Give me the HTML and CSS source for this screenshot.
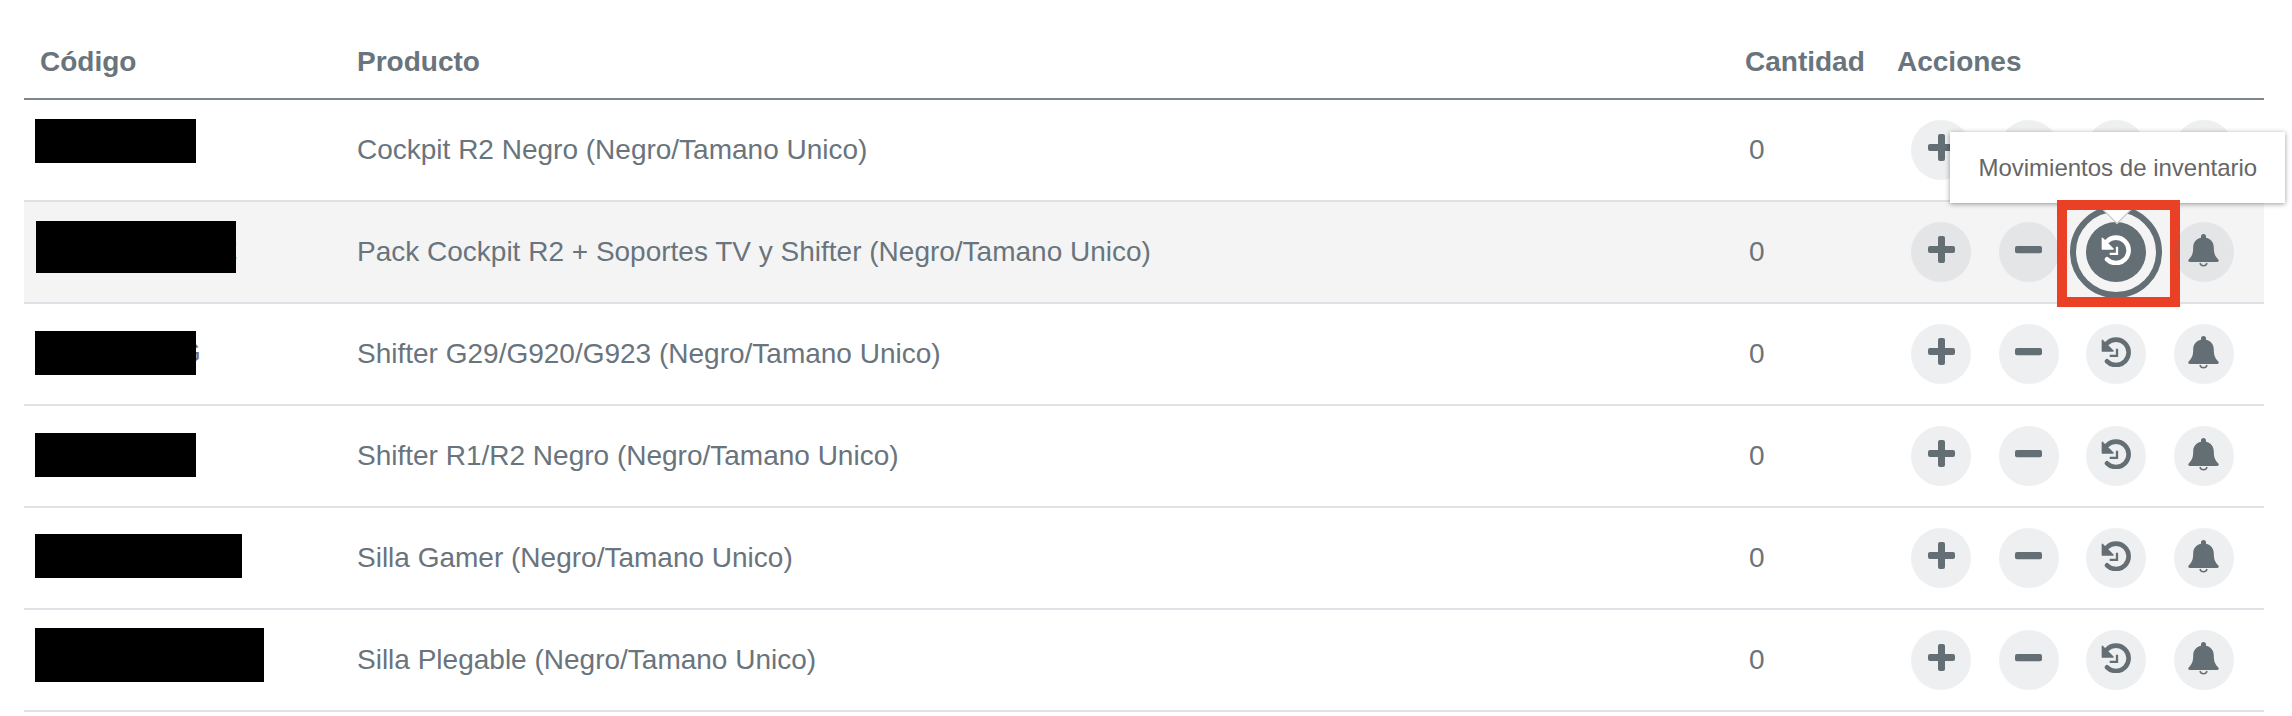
FILE: index.html

```html
<!DOCTYPE html>
<html lang="es">
<head>
<meta charset="utf-8">
<title>Inventario</title>
<link rel="stylesheet" href="styles.css">
</head>
<body>
<svg class="defs" width="0" height="0">
  <symbol id="i-plus" viewBox="0 0 27 27"><path d="M10 2a2 2 0 0 1 2-2h3a2 2 0 0 1 2 2v8h8a2 2 0 0 1 2 2v3a2 2 0 0 1-2 2h-8v8a2 2 0 0 1-2 2h-3a2 2 0 0 1-2-2v-8H2a2 2 0 0 1-2-2v-3a2 2 0 0 1 2-2h8z" fill="currentColor"/></symbol>
  <symbol id="i-minus" viewBox="0 0 27 27"><rect x="0" y="10" width="27" height="7.300" rx="2" fill="currentColor"/></symbol>
  <symbol id="i-history" viewBox="0 0 30 30">
    <path d="M6 6.300A12.700 12.700 0 1 1 6 24.300" fill="none" stroke="currentColor" stroke-width="4.600" stroke-linecap="round"/>
    <path d="M1.300 3.200v10.800h10.800z" fill="currentColor" stroke="currentColor" stroke-width="1.300" stroke-linejoin="round"/>
    <path d="M16 11.700v7.200H8.700" fill="none" stroke="currentColor" stroke-width="2.300"/>
  </symbol>
  <symbol id="i-bell" viewBox="0 0 31 34">
    <path d="M15.500 0a2.500 2.500 0 0 1 2.500 2.500v1.300c5 1 7.800 5 7.800 9.700 0 7 1.900 9.200 4.500 12 .9 1 .3 2.500-1 2.500H1.700c-1.300 0-1.900-1.500-1-2.500 2.600-2.800 4.500-5 4.500-12 0-4.700 2.800-8.700 7.800-9.700V2.500A2.500 2.500 0 0 1 15.500 0z" fill="currentColor"/>
    <path d="M12 29a3.600 3.600 0 0 0 7 0" fill="none" stroke="currentColor" stroke-width="1.500"/>
  </symbol>
</svg>
<table class="stock">
  <thead>
    <tr><th class="c-code">Código</th><th class="c-prod">Producto</th><th class="c-qty">Cantidad</th><th class="c-act">Acciones</th></tr>
  </thead>
  <tbody>
    <tr>
      <td><span class="mask m1"></span></td>
      <td>Cockpit R2 Negro (Negro/Tamano Unico)</td>
      <td>0</td>
      <td><div class="acts">
        <a class="act"><svg class="ic-pm"><use href="#i-plus"/></svg></a>
        <a class="act"><svg class="ic-pm"><use href="#i-minus"/></svg></a>
        <a class="act"><svg class="ic-h"><use href="#i-history"/></svg></a>
        <a class="act"><svg class="ic-b"><use href="#i-bell"/></svg></a>
      </div></td>
    </tr>
    <tr class="hover">
      <td><span class="mask m2"><span class="tail">2</span></span></td>
      <td>Pack Cockpit R2 + Soportes TV y Shifter (Negro/Tamano Unico)</td>
      <td>0</td>
      <td><div class="acts">
        <a class="act"><svg class="ic-pm"><use href="#i-plus"/></svg></a>
        <a class="act"><svg class="ic-pm"><use href="#i-minus"/></svg></a>
        <a class="act active"><svg class="ic-h"><use href="#i-history"/></svg>
          <span class="ring"></span>
          <span class="caret"></span>
          <span class="tip">Movimientos de inventario</span>
          <span class="redbox"></span>
        </a>
        <a class="act"><svg class="ic-b"><use href="#i-bell"/></svg></a>
      </div></td>
    </tr>
    <tr>
      <td><span class="mask m3"><span class="tail">G</span></span></td>
      <td>Shifter G29/G920/G923 (Negro/Tamano Unico)</td>
      <td>0</td>
      <td><div class="acts">
        <a class="act"><svg class="ic-pm"><use href="#i-plus"/></svg></a>
        <a class="act"><svg class="ic-pm"><use href="#i-minus"/></svg></a>
        <a class="act"><svg class="ic-h"><use href="#i-history"/></svg></a>
        <a class="act"><svg class="ic-b"><use href="#i-bell"/></svg></a>
      </div></td>
    </tr>
    <tr>
      <td><span class="mask m4"></span></td>
      <td>Shifter R1/R2 Negro (Negro/Tamano Unico)</td>
      <td>0</td>
      <td><div class="acts">
        <a class="act"><svg class="ic-pm"><use href="#i-plus"/></svg></a>
        <a class="act"><svg class="ic-pm"><use href="#i-minus"/></svg></a>
        <a class="act"><svg class="ic-h"><use href="#i-history"/></svg></a>
        <a class="act"><svg class="ic-b"><use href="#i-bell"/></svg></a>
      </div></td>
    </tr>
    <tr>
      <td><span class="mask m5"></span></td>
      <td>Silla Gamer (Negro/Tamano Unico)</td>
      <td>0</td>
      <td><div class="acts">
        <a class="act"><svg class="ic-pm"><use href="#i-plus"/></svg></a>
        <a class="act"><svg class="ic-pm"><use href="#i-minus"/></svg></a>
        <a class="act"><svg class="ic-h"><use href="#i-history"/></svg></a>
        <a class="act"><svg class="ic-b"><use href="#i-bell"/></svg></a>
      </div></td>
    </tr>
    <tr>
      <td><span class="mask m6"></span></td>
      <td>Silla Plegable (Negro/Tamano Unico)</td>
      <td>0</td>
      <td><div class="acts">
        <a class="act"><svg class="ic-pm"><use href="#i-plus"/></svg></a>
        <a class="act"><svg class="ic-pm"><use href="#i-minus"/></svg></a>
        <a class="act"><svg class="ic-h"><use href="#i-history"/></svg></a>
        <a class="act"><svg class="ic-b"><use href="#i-bell"/></svg></a>
      </div></td>
    </tr>
  </tbody>
</table>
</body>
</html>
```

FILE: styles.css

```css
html, body {
  margin: 0;
  padding: 0;
  background: #fff;
  overflow: hidden;
}
body {
  padding: 0 28px 0 24px;
  font-family: "Liberation Sans", Arial, sans-serif;
  font-size: 28px;
  color: #69747c;
}
.defs { position: absolute; }

/* table */
.stock {
  width: 100%;
  border-collapse: separate;
  border-spacing: 0;
  table-layout: fixed;
}
.stock th {
  height: 100px;
  box-sizing: border-box;
  padding: 26px 0 0 16px;
  font-weight: bold;
  text-align: left;
  border-bottom: 2px solid #7b868e;
}
.c-code { width: 317px; }
.c-qty { width: 152px; }
.c-act { width: 383px; }
.stock td {
  height: 102px;
  box-sizing: border-box;
  padding: 0 0 0 16px;
  border-bottom: 2px solid #dee2e6;
  vertical-align: middle;
}
.stock td:nth-child(3) { padding-left: 20px; }
.stock tr.hover td { background: #f4f4f5; }

/* redacted codes */
.mask {
  position: relative;
  display: block;
  left: -5px;
  width: 161px;
  height: 44px;
}
.mask::after {
  content: "";
  position: absolute;
  inset: 0;
  background: #000;
}
.tail {
  position: absolute;
  line-height: 28px;
}
.m1 { top: -9px; }
.m2 { top: -5px; left: -4px; width: 200px; height: 52px; }
.m2 .tail { left: 186px; top: 15px; }
.m3 { top: -1px; }
.m3 .tail { left: 144px; top: 8px; }
.m4 { top: -1px; }
.m5 { top: -2px; width: 207px; }
.m6 { top: -5px; width: 229px; height: 54px; }

/* action buttons */
.acts {
  display: flex;
  gap: 27.67px;
  padding-left: 14px;
}
.act {
  position: relative;
  flex: none;
  width: 60px;
  height: 60px;
  box-sizing: border-box;
  padding-bottom: 4px;
  display: flex;
  align-items: center;
  justify-content: center;
  border-radius: 50%;
  background: rgba(108, 117, 125, .115);
  color: #646e75;
}
.ic-pm { width: 27px; height: 27px; margin-bottom: 1px; }
.ic-h { width: 30px; height: 30px; }
.ic-b { width: 31px; height: 34px; margin-top: 2px; }
.act.active {
  background: #646e75;
  color: #fff;
}
.ring {
  position: absolute;
  left: -16px;
  top: -16px;
  width: 92px;
  height: 92px;
  box-sizing: border-box;
  border: 6px solid #646e75;
  border-radius: 50%;
}
.caret {
  position: absolute;
  left: 16px;
  top: -34px;
  width: 30px;
  height: 30px;
  box-sizing: border-box;
  transform: rotate(45deg);
  background: #fff;
  border-right: 1px solid #bcbfc2;
  border-bottom: 1px solid #bcbfc2;
}
.tip {
  position: absolute;
  left: -136px;
  top: -90px;
  width: 335px;
  height: 71px;
  display: flex;
  align-items: center;
  justify-content: center;
  background: #fff;
  color: #666;
  font-size: 24px;
  white-space: nowrap;
  box-shadow: 0 1px 5px rgba(0, 0, 0, .4);
}
.redbox {
  position: absolute;
  left: -29px;
  top: -22px;
  width: 123px;
  height: 107px;
  box-sizing: border-box;
  border: 10px solid #ea4025;
}
```
